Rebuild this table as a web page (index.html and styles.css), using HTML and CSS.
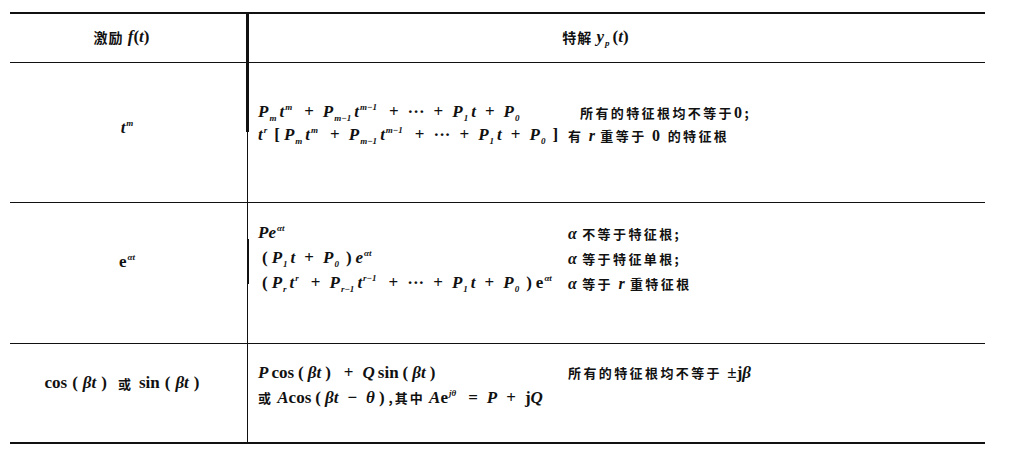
FILE: index.html
```html
<!DOCTYPE html>
<html lang="zh">
<head>
<meta charset="utf-8">
<title>特解表</title>
<link rel="stylesheet" href="styles.css">
</head>
<body>
<div class="tbl">
  <div class="cell left head hd-l"><span class="cjk">激励</span>&nbsp;<span class="f"><i>f</i><span class="r">(</span><i>t</i><span class="r">)</span></span></div>
  <div class="cell right head hd-r"><span class="cjk">特解</span>&nbsp;<span class="f"><i>y</i><sub>p</sub><span class="r">(</span><i>t</i><span class="r">)</span></span></div>

  <div class="cell left row1"><span class="f"><i>t</i><sup>m</sup></span></div>
  <div class="cell right row1">
    <div class="line">
      <span class="f"><i>P</i><sub>m</sub><i>t</i><sup>m</sup><b>+</b><i>P</i><sub>m−1</sub><i>t</i><sup>m−1</sup><b>+</b><span class="r">···</span><b>+</b><i>P</i><sub>1</sub><i>t</i><b>+</b><i>P</i><sub>0</sub></span>
      <span class="cjk d first">所有的特征根均不等于<span class="num">0</span>;</span>
    </div>
    <div class="line">
      <span class="f"><i>t</i><sup>r</sup><span class="r br">[</span><i>P</i><sub>m</sub><i>t</i><sup>m</sup><b>+</b><i>P</i><sub>m−1</sub><i>t</i><sup>m−1</sup><b>+</b><span class="r">···</span><b>+</b><i>P</i><sub>1</sub><i>t</i><b>+</b><i>P</i><sub>0</sub><span class="r br">]</span></span>
      <span class="cjk d">有 <i class="mi">r</i> 重等于 <span class="num">0</span> 的特征根</span>
    </div>
  </div>

  <div class="cell left row2"><span class="f"><span class="r">e</span><sup>αt</sup></span></div>
  <div class="cell right row2">
    <div class="line">
      <span class="f"><i>P</i><i>e</i><sup>αt</sup></span>
      <span class="cjk d"><i class="mi">α</i> 不等于特征根;</span>
    </div>
    <div class="line">
      <span class="f"><span class="r br">(</span><i>P</i><sub>1</sub><i>t</i><b>+</b><i>P</i><sub>0</sub><span class="r br">)</span><i>e</i><sup>αt</sup></span>
      <span class="cjk d"><i class="mi">α</i> 等于特征单根;</span>
    </div>
    <div class="line">
      <span class="f"><span class="r br">(</span><i>P</i><sub>r</sub><i>t</i><sup>r</sup><b>+</b><i>P</i><sub>r−1</sub><i>t</i><sup>r−1</sup><b>+</b><span class="r">···</span><b>+</b><i>P</i><sub>1</sub><i>t</i><b>+</b><i>P</i><sub>0</sub><span class="r br">)</span><span class="r">e</span><sup>αt</sup></span>
      <span class="cjk d"><i class="mi">α</i> 等于 <i class="mi">r</i> 重特征根</span>
    </div>
  </div>

  <div class="cell left row3 last"><span class="f"><span class="r">cos</span><span class="r br">(</span><i>βt</i><span class="r br">)</span></span><span class="cjk or">或</span><span class="f"><span class="r">sin</span><span class="r br">(</span><i>βt</i><span class="r br">)</span></span></div>
  <div class="cell right row3 last">
    <div class="line">
      <span class="f"><i>P</i><span class="r fn">cos</span><span class="r br">(</span><i>βt</i><span class="r br">)</span><b>+</b><i>Q</i><span class="r fn">sin</span><span class="r br">(</span><i>βt</i><span class="r br">)</span></span>
      <span class="cjk d">所有的特征根均不等于 <span class="f"><span class="r">±j</span><i>β</i></span></span>
    </div>
    <div class="line">
      <span class="f"><span class="cjk">或</span> <i>A</i><span class="r">cos</span><span class="r br">(</span><i>βt</i><b>−</b><i>θ</i><span class="r br">)</span><span class="cjk">,其中</span> <i>A</i><span class="r">e</span><sup>jθ</sup><b>=</b><i>P</i><b>+</b><span class="r">j</span><i>Q</i></span>
      <span class="cjk d"></span>
    </div>
  </div>
</div>
</body>
</html>
```

FILE: styles.css
```css
* { box-sizing: border-box; }

body {
  margin: 0;
  background: #fff;
  color: #111;
  width: 1022px;
  height: 464px;
  overflow: hidden;
}

.tbl {
  position: relative;
  display: grid;
  grid-template-columns: 238px 737px;
  grid-template-rows: 49px 140px 141px 98px;
  width: 975px;
  margin: 12px 0 0 10px;
  border-top: 2px solid #111;
  border-bottom: 2px solid #111;
  font-family: "Liberation Serif", "Noto Sans CJK SC", serif;
  font-size: 17px;
}

/* thick upper part of the column rule, as in the scan */
.tbl::before {
  content: "";
  position: absolute;
  left: 236px;
  top: 0;
  width: 3px;
  height: 118px;
  background: #111;
}

.tbl::after {
  content: "";
  position: absolute;
  left: 237px;
  top: 225px;
  width: 2px;
  height: 45px;
  background: #111;
}

.cell {
  border-bottom: 1px solid #111;
}

.cell.last {
  border-bottom: none;
}

.left {
  border-right: 1px solid #111;
  display: flex;
  align-items: center;
  justify-content: center;
}

.right {
  display: flex;
  flex-direction: column;
  justify-content: center;
  padding-left: 10px;
}

.left.row1 { padding-bottom: 9px; }
.left.row2 { padding-bottom: 22px; }
.left.row3 { padding: 0 8px 20px 0; }

.right.row1 { padding-bottom: 18px; }
.right.row2 { padding-bottom: 30px; }
.right.row3 { padding-bottom: 16px; }

.head {
  padding-bottom: 2px;
}

.hd-l {
  padding-right: 14px;
}

.hd-r {
  flex-direction: row;
  align-items: center;
  justify-content: center;
  padding: 0 42px 2px 0;
}

.line {
  display: grid;
  grid-template-columns: 310px auto;
  align-items: center;
  height: 25px;
  white-space: nowrap;
}

.row1 .line { height: 23px; }

.cjk {
  font-family: "Noto Sans CJK SC", sans-serif;
  font-weight: 700;
  font-size: 13px;
  letter-spacing: 2px;
}

.head .cjk {
  font-size: 14px;
  letter-spacing: 1px;
}

.or {
  margin: 0 8px 0 6px;
  letter-spacing: 0;
}

.d {
  letter-spacing: 2.4px;
}

.d.first {
  margin-left: 12px;
}

.num {
  font-family: "Liberation Serif", serif;
  font-size: 16px;
}

.mi {
  font-family: "Liberation Serif", serif;
  font-style: italic;
  font-weight: 700;
  font-size: 16px;
  letter-spacing: 0;
}

.f {
  font-family: "Liberation Serif", serif;
  font-weight: 700;
  font-size: 17px;
  letter-spacing: 0;
}

.f i {
  font-style: italic;
}

.f .r {
  font-style: normal;
}

.f .br {
  padding: 0 4px;
}

.left.row3 .f .br {
  padding: 0 5px;
}

.f .fn {
  margin-left: 3px;
}

.f b {
  font-weight: 700;
  margin: 0 9px;
}

.f .cjk {
  letter-spacing: 2px;
}

sub, sup {
  font-size: 9px;
  line-height: 0;
  font-style: italic;
  font-weight: 700;
  margin-left: 1px;
  margin-right: 3px;
}

sub {
  vertical-align: -4px;
}

sup {
  vertical-align: 7px;
}
```
